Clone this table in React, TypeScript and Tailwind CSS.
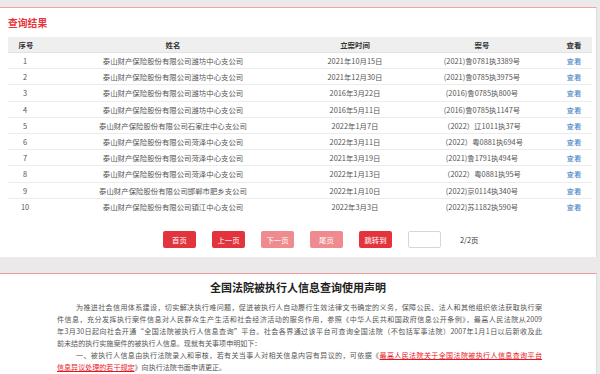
const rows = [
  ['1', '泰山财产保险股份有限公司潍坊中心支公司', '2021年10月15日', '(2021)鲁0781执3389号'],
  ['2', '泰山财产保险股份有限公司潍坊中心支公司', '2021年12月30日', '(2021)鲁0785执3975号'],
  ['3', '泰山财产保险股份有限公司潍坊中心支公司', '2016年3月22日', '(2016)鲁0785执800号'],
  ['4', '泰山财产保险股份有限公司潍坊中心支公司', '2016年5月11日', '(2016)鲁0785执1147号'],
  ['5', '泰山财产保险股份有限公司石家庄中心支公司', '2022年1月7日', '（2022）辽1011执37号'],
  ['6', '泰山财产保险股份有限公司菏泽中心支公司', '2022年3月11日', '（2022）粤0881执694号'],
  ['7', '泰山财产保险股份有限公司菏泽中心支公司', '2021年3月19日', '(2021)鲁1791执494号'],
  ['8', '泰山财产保险股份有限公司菏泽中心支公司', '2022年1月13日', '（2022）粤0881执95号'],
  ['9', '泰山财产保险股份有限公司邯郸市肥乡支公司', '2022年1月10日', '(2022)京0114执340号'],
  ['10', '泰山财产保险股份有限公司镇江中心支公司', '2022年3月3日', '(2022)苏1182执590号'],
];

const cols = 'grid grid-cols-[36px_258px_106px_148px_36px]';

function PageButton({ label, disabled }: { label: string; disabled?: boolean }) {
  return (
    <button
      className={`w-[33px] h-[17px] rounded-[2px] text-white text-[7.4px] flex items-center justify-center ${
        disabled ? 'bg-[#ef8a8f]' : 'bg-[#e2343d]'
      }`}
    >
      {label}
    </button>
  );
}

export default function App() {
  return (
    <div className="w-[600px] h-[374px] overflow-hidden bg-[#ebe9e9] font-['Noto_Sans_CJK_SC','Noto_Sans',sans-serif]">
      <div className="h-[7px]" />
      {/* 查询结果 */}
      <div className="w-[597px] bg-white border-t border-[#f0a3a3] border-r border-r-[#dddddd] h-[250px]">
        <div className="pl-[8px] pt-[9px] h-[29px] text-[9.8px] leading-[12px] font-bold text-[#e8343c]">查询结果</div>
        <div className="ml-[8px] w-[584px] text-[7.4px] text-[#555]">
          <div className={`${cols} h-[16px] bg-[#efefef] items-center text-center font-bold text-[#333] border-b border-[#e2e2e2]`}>
            <div>序号</div>
            <div>姓名</div>
            <div>立案时间</div>
            <div>案号</div>
            <div>查看</div>
          </div>
          {rows.map((r) => (
            <div key={r[0]} className={`${cols} h-[16.2px] items-center text-center border-b border-[#ececec] last:border-b-0`}>
              <div className="pr-[2px]">{r[0]}</div>
              <div>{r[1]}</div>
              <div>{r[2]}</div>
              <div>{r[3]}</div>
              <div className="text-[#3f7fc4]">查看</div>
            </div>
          ))}
        </div>
        <div className="flex items-center gap-[16px] pl-[163px] mt-[16px]">
          <PageButton label="首页" />
          <PageButton label="上一页" />
          <PageButton label="下一页" disabled />
          <PageButton label="尾页" disabled />
          <PageButton label="跳转到" />
          <div className="w-[33px] h-[17px] rounded-[2px] border border-[#d6d6d6] bg-white" />
          <span className="ml-[3px] text-[7.4px] text-[#333]">2/2页</span>
        </div>
      </div>
      <div className="h-[16px]" />
      {/* 声明 */}
      <div className="w-[597px] h-[110px] bg-white border-t border-[#ec9a9a] border-r border-r-[#dddddd]">
        <h2 className="pt-[6px] text-center text-[11px] leading-[14px] font-bold text-[#222]">
          全国法院被执行人信息查询使用声明
        </h2>
        <div className="mt-[7px] ml-[57px] w-[485px] text-[7.05px] leading-[12.1px] text-[#555] text-justify">
          <p className="indent-[19px] whitespace-nowrap [text-align-last:justify]">
            为推进社会信用体系建设，切实解决执行难问题，促进被执行人自动履行生效法律文书确定的义务，保障公民、法人和其他组织依法获取执行案
          </p>
          <p className="whitespace-nowrap [text-align-last:justify]">
            件信息，充分发挥执行案件信息对人民群众生产生活和社会经济活动的服务作用，参照《中华人民共和国政府信息公开条例》，最高人民法院从2009
          </p>
          <p className="whitespace-nowrap [text-align-last:justify]">
            年3月30日起向社会开通“全国法院被执行人信息查询”平台。社会各界通过该平台可查询全国法院（不包括军事法院）2007年1月1日以后新收及此
          </p>
          <p>前未结的执行实施案件的被执行人信息。现就有关事项申明如下：</p>
          <p className="indent-[19px] whitespace-nowrap [text-align-last:justify]">
            一、被执行人信息由执行法院录入和审核，若有关当事人对相关信息内容有异议的，可依据《
            <a className="text-[#e8141e] underline">最高人民法院关于全国法院被执行人信息查询平台</a>
          </p>
          <p>
            <a className="text-[#e8141e] underline">信息异议处理的若干规定</a>》向执行法院书面申请更正。
          </p>
        </div>
      </div>
    </div>
  );
}
